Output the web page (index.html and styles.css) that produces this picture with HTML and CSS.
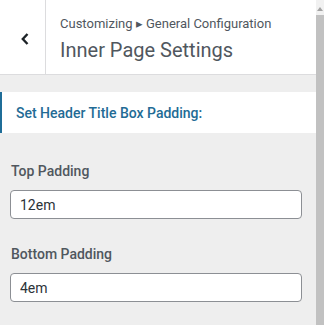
FILE: index.html
```html
<!DOCTYPE html>
<html lang="en">
<head>
    <meta charset="UTF-8">
    <meta name="viewport" content="width=device-width, initial-scale=1.0">
    <title>Inner Page Settings</title>
    <link rel="stylesheet" href="styles.css">
</head>
<body>
    <div class="frame">
        <div class="panel">
            <div class="panel-header">
                <button class="back-btn" aria-label="Back">
                    <svg width="10" height="14" viewBox="0 0 10 14">
                        <path d="M7.5 2 L2.8 7 L7.5 12" fill="none" stroke="#1d2327" stroke-width="2.4"/>
                    </svg>
                </button>
                <div class="header-titles">
                    <div class="crumbs">Customizing &#9656; General Configuration</div>
                    <div class="page-title">Inner Page Settings</div>
                </div>
            </div>

            <div class="section-title">Set Header Title Box Padding:</div>

            <div class="field">
                <label for="topPadding">Top Padding</label>
                <input type="text" id="topPadding" value="12em">
            </div>

            <div class="field">
                <label for="bottomPadding">Bottom Padding</label>
                <input type="text" id="bottomPadding" value="4em">
            </div>
        </div>

        <div class="scrollbar">
            <div class="scroll-arrow"></div>
            <div class="scroll-thumb"></div>
        </div>
    </div>
</body>
</html>
```

FILE: styles.css
```css
html, body {
    margin: 0;
    height: 100%;
    overflow: hidden;
}

body {
    font-family: Roboto, "Noto Sans", Arial, sans-serif;
    background: #eeeeee;
}

.frame {
    display: flex;
    height: 325px;
}

.panel {
    width: 316px;
    background: #eeeeee;
}

.panel-header {
    display: flex;
    height: 74px;
    background: #fff;
    border-bottom: 1px solid #dcdcde;
}

.back-btn {
    width: 46px;
    border: none;
    border-right: 1px solid #dcdcde;
    background: #fff;
    padding: 0 0 0 4px;
    display: flex;
    align-items: center;
    justify-content: center;
    cursor: pointer;
}

.back-btn svg {
    display: block;
    margin-top: 4px;
}

.header-titles {
    padding: 16px 0 0 14px;
    color: #50575e;
}

.crumbs {
    font-size: 13px;
    line-height: 16px;
}

.page-title {
    font-size: 20px;
    line-height: 26px;
    margin-top: 5px;
}

.section-title {
    margin-top: 17px;
    height: 41px;
    background: #fff;
    border-left: 2px solid #1f6d98;
    padding-left: 14px;
    display: flex;
    align-items: center;
    font-size: 14px;
    font-weight: 500;
    color: #226b95;
}

.field {
    padding: 0 14px 0 10px;
}

.section-title + .field {
    margin-top: 29px;
}

.field + .field {
    margin-top: 26px;
}

.field label {
    display: block;
    font-size: 14px;
    font-weight: 500;
    color: #50575e;
    line-height: 18px;
    padding-left: 1px;
}

.field input {
    display: block;
    box-sizing: border-box;
    width: 292px;
    height: 29px;
    margin-top: 10px;
    border: 1px solid #8c8f94;
    border-radius: 4px;
    background: #fff;
    padding: 0 9px;
    font-family: Roboto, "Noto Sans", Arial, sans-serif;
    font-size: 14px;
    color: #2c3338;
}

.scrollbar {
    width: 8px;
    background: #f1f1f1;
    display: flex;
    flex-direction: column;
}

.scroll-arrow {
    height: 15px;
    position: relative;
}

.scroll-arrow::after {
    content: "";
    position: absolute;
    left: 1px;
    top: 7px;
    border-left: 3px solid transparent;
    border-right: 3px solid transparent;
    border-bottom: 4px solid #a3a3a3;
}

.scroll-thumb {
    flex: 1;
    background: #c1c1c1;
}
```
